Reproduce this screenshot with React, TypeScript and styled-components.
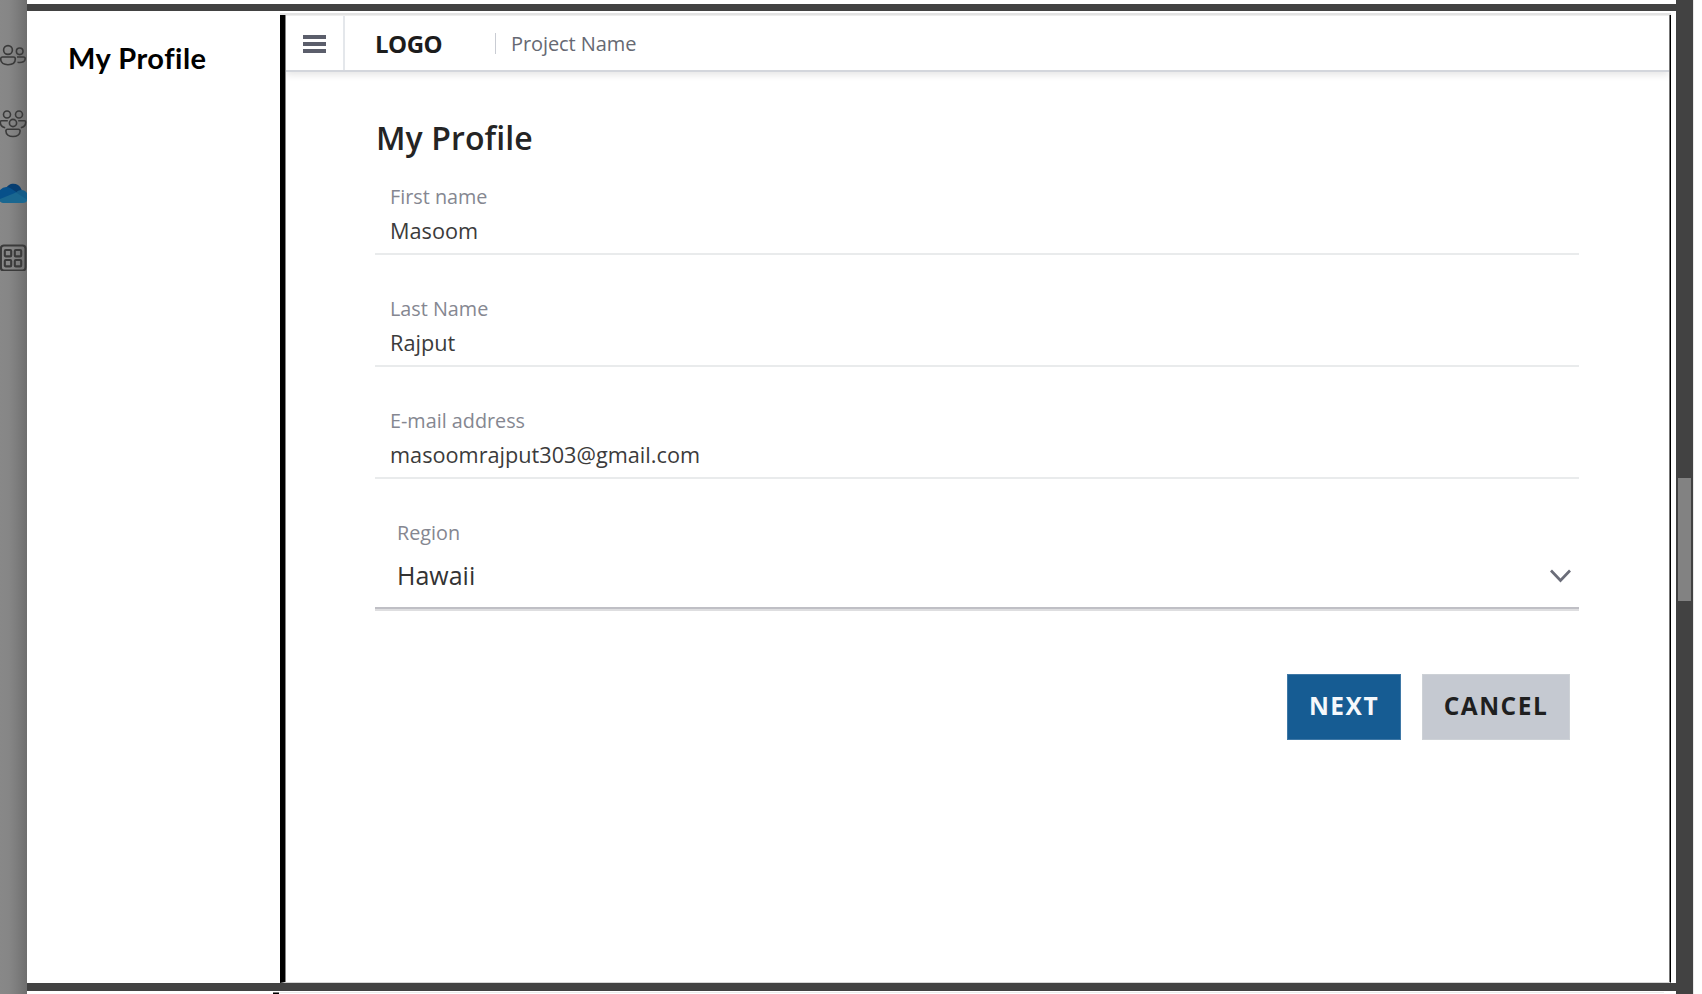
import React from "react";
import styled, { createGlobalStyle } from "styled-components";

const GlobalStyle = createGlobalStyle`
  * { box-sizing: border-box; }
  html, body { margin: 0; padding: 0; overflow: hidden; background: #fff; }
  button { font: inherit; }
`;

const Screen = styled.div`
  display: flex;
  width: 1702px;
  height: 994px;
  overflow: hidden;
  background: #fff;
  font-family: "Open Sans", "Noto Sans", sans-serif;
`;

const Rail = styled.nav`
  display: flex;
  flex-direction: column;
  flex: none;
  width: 27px;
  background: linear-gradient(90deg, #888 0, #868686 9px, #7e7e7e 16px, #6e6e6e 27px);
`;

const RailIcon = styled.svg<{ $gap: number; $weight?: number }>`
  display: block;
  flex: none;
  width: 27px;
  height: 30px;
  margin-top: ${(p) => p.$gap}px;
  fill: none;
  stroke: #3a3a3a;
  stroke-width: ${(p) => p.$weight ?? 1.6};
`;

const Viewer = styled.div`
  display: flex;
  flex-direction: column;
  width: 1649px;
  flex: none;
`;

const Gap = styled.div<{ $height: number }>`
  flex: none;
  height: ${(p) => p.$height}px;
  background: #424242;
`;

const PreviousPage = styled.div`
  flex: none;
  height: 4px;
`;

const Page = styled.main`
  display: flex;
  flex: none;
  height: 972px;
`;

const NextPage = styled.div`
  display: flex;
  flex: none;
  height: 3px;
  padding: 1px 12px 0 246px;
`;

const NextEdge = styled.div`
  width: 6px;
  height: 2px;
  background: #000;
  border-top: 1px solid #777;
`;

const NextBody = styled.div`
  flex: 1;
  height: 1px;
  background: #ebebeb;
`;

const Notes = styled.aside`
  flex: none;
  width: 253px;
  padding: 27px 0 0 41px;
`;

const NotesTitle = styled.h2`
  margin: 0;
  font: 700 29px/40px Lato, sans-serif;
  letter-spacing: 0.5px;
  color: #000;
  white-space: nowrap;
`;

const Frame = styled.section`
  display: flex;
  flex-direction: column;
  width: 1391px;
  flex: none;
  padding-top: 2px;
`;

const FrameTop = styled.div`
  height: 2px;
  flex: none;
  background: #e2e2e2;
`;

const FrameBody = styled.div`
  display: flex;
  flex-direction: column;
  flex: 1;
  border-left: 5px solid #000;
  border-right: 1px solid #000;
  border-bottom: 1px solid #d5d5d5;
  box-shadow: inset 1px 0 #858585, inset -1px 0 #777;
`;

const Header = styled.header`
  display: flex;
  align-items: center;
  flex: none;
  height: 57px;
  margin: 0 1px;
  border-top: 1px solid #eee;
  border-bottom: 2px solid #d3d6dc;
  box-shadow: 0 3px 7px rgba(0, 0, 0, 0.1);
  clip-path: inset(0 0 -12px 0);
`;

const MenuButton = styled.button`
  display: flex;
  align-items: center;
  justify-content: flex-start;
  width: 59px;
  height: 54px;
  padding: 1px 0 0 17px;
  border: 0;
  border-right: 2px solid #e4e7eb;
  background: none;
`;

const Bars = styled.span`
  display: grid;
  gap: 3px;
  width: 23px;
`;

const Bar = styled.span`
  height: 4px;
  background: #5b5e6b;
`;

const Logo = styled.strong`
  width: 120px;
  margin-left: 30px;
  padding-top: 1px;
  font: 700 24px/30px "Open Sans", sans-serif;
  letter-spacing: -0.5px;
  color: #1c1c1c;
`;

const Project = styled.span`
  display: flex;
  align-items: center;
  height: 21px;
  padding: 1px 0 0 15px;
  border-left: 1px solid #c9ccd3;
  font-size: 20px;
  letter-spacing: -0.08px;
  color: #666973;
  white-space: nowrap;
`;

const Form = styled.form`
  display: flex;
  flex-direction: column;
  width: 1204px;
  margin-left: 90px;
  padding-top: 44px;
`;

const Title = styled.h1`
  margin: 0 0 13px;
  padding-left: 1px;
  font: 600 32px/44px "Open Sans", sans-serif;
  letter-spacing: 0.1px;
  color: #242424;
`;

const Field = styled.div`
  display: flex;
  flex-direction: column;
  height: 82px;
  margin-bottom: 30px;
  padding: 0 15px;
  border-bottom: 2px solid #e9ebec;
`;

const RegionField = styled(Field)`
  height: 102px;
  margin: 0 0 63px;
  padding: 0 8px 0 22px;
  border-bottom: 0;
  box-shadow: inset 0 -2px #dedee0, inset 0 -4px #bfbfc5;
`;

const Label = styled.label`
  margin-top: 9px;
  font-size: 19.8px;
  line-height: 30px;
  color: #858791;
`;

const Value = styled.span`
  margin-top: 4px;
  font-size: 21.7px;
  line-height: 30px;
  color: #3b3b3b;
`;

const Select = styled.div`
  display: flex;
  align-items: center;
  justify-content: space-between;
  height: 44px;
  margin-top: 5px;
  font-size: 25px;
  color: #333;
`;

const Chevron = styled.svg`
  width: 21px;
  height: 14px;
  margin-top: 2px;
  fill: none;
  stroke: #6b6d79;
  stroke-width: 2.7;
`;

const Actions = styled.div`
  display: flex;
  justify-content: flex-end;
  gap: 21px;
  padding-right: 9px;
`;

const ActionButton = styled.button<{ $primary?: boolean }>`
  width: ${(p) => (p.$primary ? 114 : 148)}px;
  height: 66px;
  padding: 0 0 3px;
  border: 1px solid ${(p) => (p.$primary ? "#3f78a6" : "#cdd1d6")};
  background: ${(p) => (p.$primary ? "#165c93" : "#c5c9d1")};
  color: ${(p) => (p.$primary ? "#f5f8fb" : "#1f1f1f")};
  font-weight: 700;
  font-size: 24.5px;
  letter-spacing: 1.5px;
`;

const ScrollTrack = styled.div`
  flex: none;
  width: 17px;
  padding: 478px 2px 0;
  background: #424242;
`;

const ScrollThumb = styled.div`
  height: 123px;
  background: #828282;
`;

const WindowEdge = styled.div`
  width: 9px;
  border-left: 1px solid #e8e8e8;
`;

const fields = [
  ["First name", "Masoom"],
  ["Last Name", "Rajput"],
  ["E-mail address", "masoomrajput303@gmail.com"],
];

export default function App() {
  return (
    <>
      <GlobalStyle />
      <Screen>
        <Rail>
          <RailIcon $gap={40} viewBox="0 0 27 30">
            <circle cx="8" cy="10" r="4.4" />
            <circle cx="19.7" cy="11.3" r="3.3" />
            <path d="M2.5 17H13.5Q15.3 17 15.3 19C15.3 23 12 24.7 8 24.7S.7 23 .7 19Q.7 17 2.5 17ZM17 17H23.5Q25.2 17 25.2 18.7C25.2 21.5 22.8 23 17.5 22.3" />
          </RailIcon>
          <RailIcon $gap={38} viewBox="0 0 27 30">
            <circle cx="7" cy="6.5" r="3.5" />
            <circle cx="19" cy="6.5" r="3.5" />
            <circle cx="13" cy="15" r="3.6" />
            <path d="M7.8 12.7H1.5Q.3 12.7.3 14C.3 17 2 19.2 5.2 19.7M18.2 12.7H24.5Q25.7 12.7 25.7 14C25.7 17 24 19.2 20.8 19.7M7.6 21.3H18.4Q20.1 21.3 20.1 23C20.1 26.5 17 28.5 13 28.5S5.9 26.5 5.9 23Q5.9 21.3 7.6 21.3Z" />
          </RailIcon>
          <RailIcon $gap={43} $weight={0} viewBox="0 0 27 30">
            <path fill="#063d70" d="M5.5 8.5C8 1.5 18 .5 21.5 8.5L20 15 5 13Z" />
            <path fill="#07508a" d="M0 9Q5 4 11 7.5L17 11.5 1 21 0 20Z" />
            <path fill="#155c88" d="M15 12Q20 7 25 10L27 12V20L14 14Z" />
            <path fill="#1a6790" d="M0 18L16 11.5 27 18.5V20Q26 22 23 22H3Q1 22 0 20Z" />
          </RailIcon>
          <RailIcon $gap={30} $weight={2.1} viewBox="0 0 27 30">
            <rect x=".9" y="4.5" width="24.6" height="25" rx="3" />
            <rect x="4.8" y="9" width="6.4" height="6.4" rx="1" />
            <rect x="14.8" y="9" width="6.4" height="6.4" rx="1" />
            <rect x="4.8" y="19" width="6.4" height="6.4" rx="1" />
            <rect x="14.8" y="19" width="6.4" height="6.4" rx="1" />
          </RailIcon>
        </Rail>
        <Viewer>
          <PreviousPage />
          <Gap $height={7} />
          <Page>
            <Notes>
              <NotesTitle>My Profile</NotesTitle>
            </Notes>
            <Frame>
              <FrameTop />
              <FrameBody>
                <Header>
                  <MenuButton aria-label="Menu">
                    <Bars><Bar /><Bar /><Bar /></Bars>
                  </MenuButton>
                  <Logo>LOGO</Logo>
                  <Project>Project Name</Project>
                </Header>
                <Form>
                  <Title>My Profile</Title>
                  {fields.map(([label, value]) => (
                    <Field key={label}>
                      <Label>{label}</Label>
                      <Value>{value}</Value>
                    </Field>
                  ))}
                  <RegionField>
                    <Label>Region</Label>
                    <Select>
                      Hawaii
                      <Chevron viewBox="0 0 21 14"><path d="M1 1.5L10.5 11.5L20 1.5" /></Chevron>
                    </Select>
                  </RegionField>
                  <Actions>
                    <ActionButton type="button" $primary>NEXT</ActionButton>
                    <ActionButton type="button">CANCEL</ActionButton>
                  </Actions>
                </Form>
              </FrameBody>
            </Frame>
          </Page>
          <Gap $height={8} />
          <NextPage><NextEdge /><NextBody /></NextPage>
        </Viewer>
        <ScrollTrack><ScrollThumb /></ScrollTrack>
        <WindowEdge />
      </Screen>
    </>
  );
}
